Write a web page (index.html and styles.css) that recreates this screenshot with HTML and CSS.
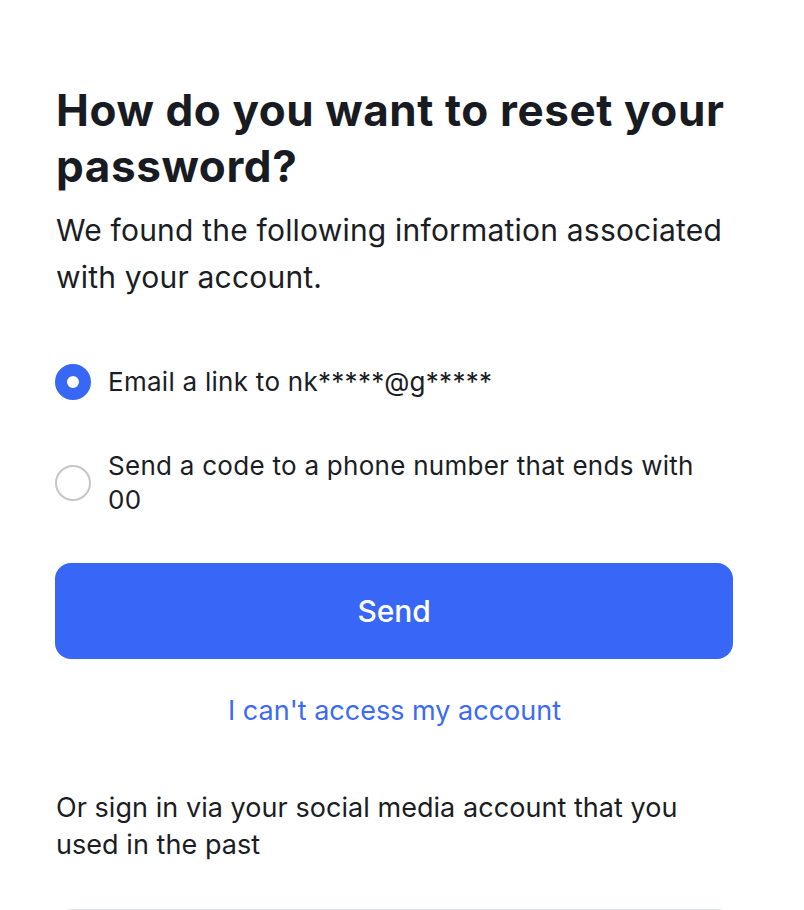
FILE: index.html
```html
<!DOCTYPE html>
<html lang="en">
<head>
<meta charset="utf-8">
<title>Reset password</title>
<link rel="stylesheet" href="styles.css">
</head>
<body>
<main class="page">
  <h1 class="title">How do you want to reset your password?</h1>
  <p class="lead">We found the following information associated with your account.</p>

  <div class="options">
    <label class="option">
      <span class="radio radio-on"></span>
      <span class="option-text">Email a link to nk*****@g*****</span>
    </label>
    <label class="option">
      <span class="radio"></span>
      <span class="option-text">Send a code to a phone number that ends with 00</span>
    </label>
  </div>

  <button class="send">Send</button>
  <a class="help" href="#">I can't access my account</a>

  <p class="social">Or sign in via your social media account that you used in the past</p>
  <div class="card"></div>
</main>
</body>
</html>
```

FILE: styles.css
```css
html, body {
  margin: 0;
  background: #ffffff;
}
body {
  font-family: Inter, "Noto Sans", sans-serif;
  color: #1b1d24;
  overflow: hidden;
  height: 910px;
}
.page {
  padding: 82px 71px 0 56px;
  display: flex;
  flex-direction: column;
}
.title {
  margin: 0;
  font-size: 44px;
  line-height: 56px;
  font-weight: 700;
  letter-spacing: 0.6px;
  color: #191b23;
}
.lead {
  margin: 13px 0 0;
  font-size: 30px;
  line-height: 47px;
  font-weight: 400;
  letter-spacing: 0.2px;
  color: #1b1d24;
}
.options {
  margin-top: 63px;
  display: flex;
  flex-direction: column;
  gap: 49px;
}
.option {
  display: flex;
  align-items: center;
  gap: 17px;
}
.radio {
  flex: 0 0 auto;
  width: 32px;
  height: 32px;
  border-radius: 50%;
  border: 2px solid #c4c6cb;
  box-sizing: content-box;
  margin-left: -1px;
}
.radio-on {
  border: 12px solid #3867f6;
  width: 12px;
  height: 12px;
  background: #fff;
}
.option-text {
  font-size: 26px;
  line-height: 34px;
  letter-spacing: 0.27px;
  color: #1b1d24;
}
.send {
  margin-top: 46px;
  height: 96px;
  border: 0;
  border-radius: 16px;
  background: #3867f8;
  color: #fff;
  font-family: inherit;
  font-size: 30px;
  font-weight: 500;
  letter-spacing: -0.1px;
  width: 678px;
  margin-left: -1px;
}
.help {
  margin-top: 35px;
  align-self: center;
  font-size: 27px;
  line-height: 34px;
  color: #3d6af4;
  text-decoration: none;
  letter-spacing: 0;
}
.social {
  margin: 61px 0 0;
  font-size: 27px;
  line-height: 37px;
  letter-spacing: 0.05px;
  color: #1b1d24;
}
.card {
  margin-top: 46px;
  margin-left: 1px;
  width: 671px;
  height: 80px;
  border: 2px solid #e4e5ea;
  border-radius: 14px;
}
```
